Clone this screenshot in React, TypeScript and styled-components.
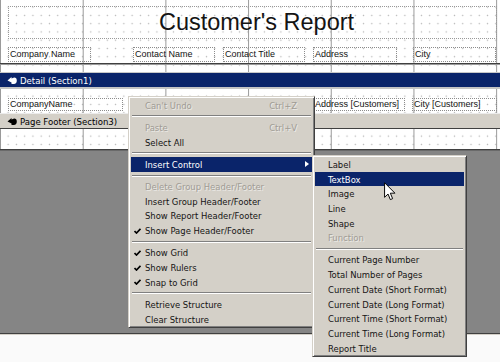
import React from 'react'
import styled, { createGlobalStyle } from 'styled-components'

const Colors = {
  Face: '#d4d0c8',
  Shadow: '#808080',
  DarkShadow: '#404040',
  Highlight: '#0a246a',
  Disabled: '#a09c95',
  Workspace: '#858585',
  GridLine: '#9a9a9a',
  GridDot: '#b4b4b4',
  Text: '#141414',
}

const UiFont = `'DejaVu Sans Condensed', 'Liberation Sans', Arial, sans-serif`

const GlobalStyle = createGlobalStyle`
  html, body {
    margin: 0;
    padding: 0;
    background: #fafafa;
    overflow: hidden;
  }
  body {
    font-family: 'Liberation Sans', Arial, sans-serif;
  }
`

const Designer = styled.div`
  position: relative;
  width: 500px;
  height: 362px;
  display: flex;
  flex-direction: column;
  overflow: hidden;
  background: #fafafa;
`

const ReportSection = styled.div<{ $h: number }>`
  flex: none;
  height: ${p => p.$h}px;
  display: flex;
  flex-direction: column;
  background-color: #fff;
  background-image: linear-gradient(
      to right,
      transparent 81.7px,
      ${Colors.GridLine} 81.7px,
      ${Colors.GridLine} 82.7px,
      transparent 82.7px
    ),
    radial-gradient(circle, ${Colors.GridDot} 0.6px, transparent 1px);
  background-size: 82.7px 100%, 8.27px 8.27px;
  background-position: 1px 0, 4px 3px;
`

const TitleBox = styled.div`
  margin: 6px 3px 0 8px;
  height: 33px;
  box-sizing: border-box;
  border: 1px dotted #999;
  display: flex;
  align-items: center;
  justify-content: center;
  padding: 0 0 1px 8px;
  font-size: 23.5px;
  color: ${Colors.Text};
`

const FieldRow = styled.div<{ $top: number }>`
  display: flex;
  margin-top: ${p => p.$top}px;
  padding-left: 8px;
`

const Field = styled.div<{ $w: number; $ml?: number; $h?: number }>`
  flex: none;
  width: ${p => p.$w}px;
  height: ${p => p.$h ?? 15}px;
  margin-left: ${p => p.$ml ?? 0}px;
  box-sizing: border-box;
  border: 1px dotted #8c8c8c;
  padding-left: 1px;
  font-size: 9px;
  line-height: ${p => (p.$h ?? 15) - 2}px;
  color: ${Colors.Text};
  white-space: nowrap;
  overflow: hidden;
`

const HeaderRule = styled.div`
  margin-top: 1px;
  height: 1px;
  background: ${Colors.DarkShadow};
  border-bottom: 1px solid #9c9c9c;
`

const SectionBar = styled.div<{ $active?: boolean }>`
  flex: none;
  height: 14px;
  display: flex;
  align-items: center;
  gap: 3px;
  padding-left: 7px;
  font-family: ${UiFont};
  font-size: 9.5px;
  background: ${p => (p.$active ? Colors.Highlight : Colors.Face)};
  color: ${p => (p.$active ? '#fff' : '#000')};
  border-top: 1px solid ${p => (p.$active ? '#c8c8c8' : '#ececec')};
  border-bottom: ${p => (p.$active ? `2px solid #c4c4c4` : `1px solid ${Colors.DarkShadow}`)};
`

const Rule = styled.div<{ $light?: boolean }>`
  flex: none;
  height: 1px;
  background: ${Colors.DarkShadow};
  border-bottom: 1px solid ${p => (p.$light ? Colors.Face : '#6a6a6a')};
`

const Workspace = styled.div`
  flex: 1;
  background: ${Colors.Workspace};
`

const PageBottom = styled.div`
  flex: none;
  height: 27px;
  background: #fafafa;
`

const MenuBox = styled.div<{ $x: number; $y: number; $w: number }>`
  position: absolute;
  left: ${p => p.$x}px;
  top: ${p => p.$y}px;
  width: ${p => p.$w}px;
  box-sizing: border-box;
  padding: 1px 2px;
  background: ${Colors.Face};
  border: 1px solid;
  border-color: ${Colors.Face} ${Colors.DarkShadow} ${Colors.DarkShadow} ${Colors.Face};
  box-shadow: inset 1px 1px #fff, inset -1px -1px ${Colors.Shadow};
  font-family: ${UiFont};
  font-size: 9.4px;
  z-index: 2;
`

const MenuRow = styled.div<{ $active?: boolean; $disabled?: boolean }>`
  display: flex;
  align-items: center;
  height: 14.7px;
  white-space: nowrap;
  background: ${p => (p.$active ? Colors.Highlight : 'transparent')};
  color: ${p => (p.$active ? '#fff' : p.$disabled ? Colors.Disabled : Colors.Text)};
  text-shadow: ${p => (p.$disabled ? '1px 1px 0 rgba(255,255,255,0.55)' : 'none')};
`

const CheckSlot = styled.span<{ $w: number }>`
  flex: none;
  width: ${p => p.$w}px;
  display: flex;
  align-items: center;
  padding-left: 3px;
  box-sizing: border-box;
`

const Shortcut = styled.span`
  margin-left: auto;
  padding-right: 15px;
`

const SubArrow = styled.span`
  margin-left: auto;
  margin-right: 3px;
  width: 0;
  height: 0;
  border-top: 3.5px solid transparent;
  border-bottom: 3.5px solid transparent;
  border-left: 4px solid #fff;
`

const Separator = styled.div`
  height: 7.5px;
  display: flex;
  align-items: center;
  &::after {
    content: '';
    flex: 1;
    margin: 0 1px;
    height: 1px;
    background: ${Colors.Shadow};
    border-bottom: 1px solid #fff;
  }
`

const Pointer = styled.svg`
  position: absolute;
  left: 384px;
  top: 182px;
  z-index: 3;
`

type MenuEntry =
  | 'sep'
  | {
      label: string
      shortcut?: string
      disabled?: boolean
      checked?: boolean
      active?: boolean
      sub?: boolean
    }

const mainItems: MenuEntry[] = [
  { label: "Can't Undo", shortcut: 'Ctrl+Z', disabled: true },
  'sep',
  { label: 'Paste', shortcut: 'Ctrl+V', disabled: true },
  { label: 'Select All' },
  'sep',
  { label: 'Insert Control', active: true, sub: true },
  'sep',
  { label: 'Delete Group Header/Footer', disabled: true },
  { label: 'Insert Group Header/Footer' },
  { label: 'Show Report Header/Footer' },
  { label: 'Show Page Header/Footer', checked: true },
  'sep',
  { label: 'Show Grid', checked: true },
  { label: 'Show Rulers', checked: true },
  { label: 'Snap to Grid', checked: true },
  'sep',
  { label: 'Retrieve Structure' },
  { label: 'Clear Structure' },
]

const controlItems: MenuEntry[] = [
  { label: 'Label' },
  { label: 'TextBox', active: true },
  { label: 'Image' },
  { label: 'Line' },
  { label: 'Shape' },
  { label: 'Function', disabled: true },
  'sep',
  { label: 'Current Page Number' },
  { label: 'Total Number of Pages' },
  { label: 'Current Date (Short Format)' },
  { label: 'Current Date (Long Format)' },
  { label: 'Current Time (Short Format)' },
  { label: 'Current Time (Long Format)' },
  { label: 'Report Title' },
]

const CheckMark = () => (
  <svg width="7" height="6" viewBox="0 0 7 6">
    <path d="M0.5 3 L2.5 5 L6.5 0.8" fill="none" stroke="#000" strokeWidth="1.7" />
  </svg>
)

const SectionIcon: React.FC<{ color: string }> = ({ color }) => (
  <svg width="10" height="9" viewBox="0 0 10 9">
    <path
      d="M0.5 4.5 L4.5 1 L4.5 2.5 L7.2 1.6 Q9.8 1.6 9.8 4.6 Q9.8 8 6.8 8 L4.5 8 L4.5 6.6 Z"
      fill={color}
    />
  </svg>
)

const Menu: React.FC<{ x: number; y: number; w: number; slot: number; items: MenuEntry[] }> = ({
  x,
  y,
  w,
  slot,
  items,
}) => (
  <MenuBox $x={x} $y={y} $w={w}>
    {items.map((item, i) =>
      item === 'sep' ? (
        <Separator key={i} />
      ) : (
        <MenuRow key={i} $active={item.active} $disabled={item.disabled}>
          <CheckSlot $w={slot}>{item.checked && <CheckMark />}</CheckSlot>
          {item.label}
          {item.shortcut && <Shortcut>{item.shortcut}</Shortcut>}
          {item.sub && <SubArrow />}
        </MenuRow>
      )
    )}
  </MenuBox>
)

export default function App() {
  return (
    <>
      <GlobalStyle />
      <Designer>
        <ReportSection $h={72}>
          <TitleBox>Customer's Report</TitleBox>
          <FieldRow $top={8}>
            <Field $w={83}>Company Name</Field>
            <Field $w={82} $ml={42}>Contact Name</Field>
            <Field $w={82} $ml={8}>Contact Title</Field>
            <Field $w={84} $ml={8}>Address</Field>
            <Field $w={83} $ml={16}>City</Field>
          </FieldRow>
          <HeaderRule />
        </ReportSection>

        <SectionBar $active>
          <SectionIcon color="#fff" />
          Detail (Section1)
        </SectionBar>

        <ReportSection $h={24}>
          <FieldRow $top={9}>
            <Field $w={115} $h={13}>CompanyName</Field>
            <Field $w={92} $h={13} $ml={190}>Address [Customers]</Field>
            <Field $w={85} $h={13} $ml={7}>City [Customers]</Field>
          </FieldRow>
        </ReportSection>

        <SectionBar>
          <SectionIcon color="#000" />
          Page Footer (Section3)
        </SectionBar>

        <ReportSection $h={20} />
        <Rule />
        <Workspace />
        <Rule $light />
        <PageBottom />

        <Menu x={128} y={96} w={187} slot={14} items={mainItems} />
        <Menu x={312} y={155} w={155} slot={13} items={controlItems} />

        <Pointer width="12" height="19" viewBox="0 0 12.5 19.5">
          <path
            d="M0.6 0.6 L0.6 15.8 L4.2 12.4 L6.6 18.2 L9 17.2 L6.6 11.5 L11.4 11.5 Z"
            fill="#fff"
            stroke="#000"
            strokeWidth="1"
            strokeLinejoin="miter"
          />
        </Pointer>
      </Designer>
    </>
  )
}
